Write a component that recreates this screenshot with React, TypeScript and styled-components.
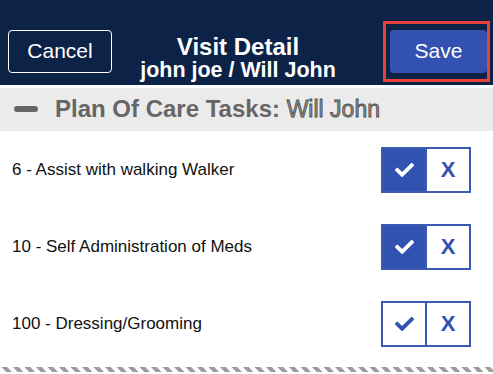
import { FC, useState } from "react";
import styled, { createGlobalStyle } from "styled-components";

const GlobalStyle = createGlobalStyle`
  html, body {
    margin: 0;
    padding: 0;
    background: #ffffff;
    font-family: "Liberation Sans", Arial, Helvetica, sans-serif;
  }
`;

type Task = {
  id: string;
  label: string;
  done: boolean;
};

const initialTasks: Task[] = [
  { id: "6", label: "6 - Assist with walking Walker", done: true },
  { id: "10", label: "10 - Self Administration of Meds", done: true },
  { id: "100", label: "100 - Dressing/Grooming", done: false },
];

const CheckIcon: FC = () => (
  <svg width="19" height="14" viewBox="0 71 512 370" fill="currentColor">
    <path d="M173.898 439.404l-166.4-166.4c-9.997-9.997-9.997-26.206 0-36.204l36.203-36.204c9.997-9.998 26.207-9.998 36.204 0L192 312.69 432.095 72.596c9.997-9.997 26.207-9.997 36.204 0l36.203 36.204c9.997 9.997 9.997 26.206 0 36.204l-294.4 294.401c-9.998 9.997-26.207 9.997-36.204-.001z" />
  </svg>
);

type ToggleProps = {
  done: boolean;
  onChange: (done: boolean) => void;
};

const TaskToggle: FC<ToggleProps> = ({ done, onChange }) => (
  <Toggle>
    <CheckCell $active={done} onClick={() => onChange(true)}>
      <CheckIcon />
    </CheckCell>
    <CrossCell onClick={() => onChange(false)}>X</CrossCell>
  </Toggle>
);

export default function App() {
  const [tasks, setTasks] = useState<Task[]>(initialTasks);

  const setDone = (id: string, done: boolean) => {
    setTasks((prev) => prev.map((t) => (t.id === id ? { ...t, done } : t)));
  };

  return (
    <>
      <GlobalStyle />
      <Page>
        <Header>
          <CancelButton type="button">Cancel</CancelButton>
          <TitleBlock>
            <Title>Visit Detail</Title>
            <SubTitle>john joe / Will John</SubTitle>
          </TitleBlock>
          <SaveFocus>
            <SaveButton type="button">Save</SaveButton>
          </SaveFocus>
        </Header>

        <SectionBar>
          <Minus />
          <SectionTitle>
            Plan Of Care Tasks: <Patient>Will John</Patient>
          </SectionTitle>
        </SectionBar>

        <TaskList>
          {tasks.map((task) => (
            <TaskRow key={task.id}>
              <TaskLabel>{task.label}</TaskLabel>
              <TaskToggle
                done={task.done}
                onChange={(done) => setDone(task.id, done)}
              />
            </TaskRow>
          ))}
        </TaskList>

        <TornEdge />
      </Page>
    </>
  );
}

const Page = styled.div`
  width: 493px;
  height: 374px;
  overflow: hidden;
  background: #ffffff;
`;

const Header = styled.header`
  display: grid;
  grid-template-columns: auto 1fr auto;
  align-items: center;
  height: 85px;
  box-sizing: border-box;
  padding: 20px 3px 4px 8px;
  background: #0c2347;
`;

const CancelButton = styled.button`
  width: 104px;
  height: 43px;
  border: 1px solid #ffffff;
  border-radius: 4px;
  background: transparent;
  color: #ffffff;
  font-family: inherit;
  font-size: 21px;
  padding: 0;
  padding-bottom: 1px;
`;

const TitleBlock = styled.div`
  align-self: start;
  display: flex;
  flex-direction: column;
  align-items: center;
  padding-top: 15px;
  padding-right: 19px;
  color: #ffffff;
  font-weight: bold;
`;

const Title = styled.div`
  font-size: 24px;
  line-height: 24px;
`;

const SubTitle = styled.div`
  font-size: 21.5px;
  line-height: 23px;
`;

const SaveFocus = styled.div`
  display: flex;
  border: 3px solid #e8413c;
  padding: 6px 0 6px 4px;
`;

const SaveButton = styled.button`
  width: 97px;
  height: 43px;
  border: none;
  border-radius: 4px;
  background: #3251b0;
  color: #ffffff;
  font-family: inherit;
  font-size: 21px;
  padding: 0;
  padding-bottom: 1px;
`;

const SectionBar = styled.div`
  display: flex;
  align-items: center;
  gap: 17px;
  height: 43px;
  margin-top: 3px;
  padding-left: 14px;
  padding-bottom: 2px;
  box-sizing: border-box;
  background: #ebebeb;
`;

const Minus = styled.span`
  display: block;
  width: 24px;
  height: 6px;
  border-radius: 3px;
  background: #666666;
  margin-top: 1px;
`;

const SectionTitle = styled.div`
  font-size: 24px;
  font-weight: bold;
  color: #666666;
  white-space: nowrap;
`;

const Patient = styled.span`
  font-weight: normal;
  font-size: 23px;
  color: #8c8c8c;
  -webkit-text-stroke: 0.8px #4e4e4e;
`;

const TaskList = styled.div`
  display: flex;
  flex-direction: column;
`;

const TaskRow = styled.div`
  display: flex;
  align-items: center;
  justify-content: space-between;
  height: 77px;
  padding: 0 22px 0 12px;
`;

const TaskLabel = styled.span`
  font-size: 17px;
  color: #111111;
`;

const Toggle = styled.div`
  display: flex;
  width: 90px;
  height: 46px;
  box-sizing: border-box;
  border: 2px solid #3a5ab4;
`;

const CheckCell = styled.div<{ $active: boolean }>`
  display: flex;
  align-items: center;
  justify-content: center;
  width: 42px;
  border-right: 2px solid #3a5ab4;
  background: ${(p) => (p.$active ? "#3152ae" : "#ffffff")};
  color: ${(p) => (p.$active ? "#ffffff" : "#3152ae")};
  cursor: pointer;
`;

const CrossCell = styled.div`
  flex: 1;
  display: flex;
  align-items: center;
  justify-content: center;
  font-size: 22px;
  font-weight: bold;
  color: #3152ae;
  cursor: pointer;
`;

const TornEdge = styled.div`
  height: 5px;
  margin-top: 5px;
  background-image: linear-gradient(
    45deg,
    transparent 40%,
    #9c9c9c 40%,
    #9c9c9c 72%,
    transparent 72%
  );
  background-size: 11.5px 5px;
  background-repeat: repeat-x;
`;
